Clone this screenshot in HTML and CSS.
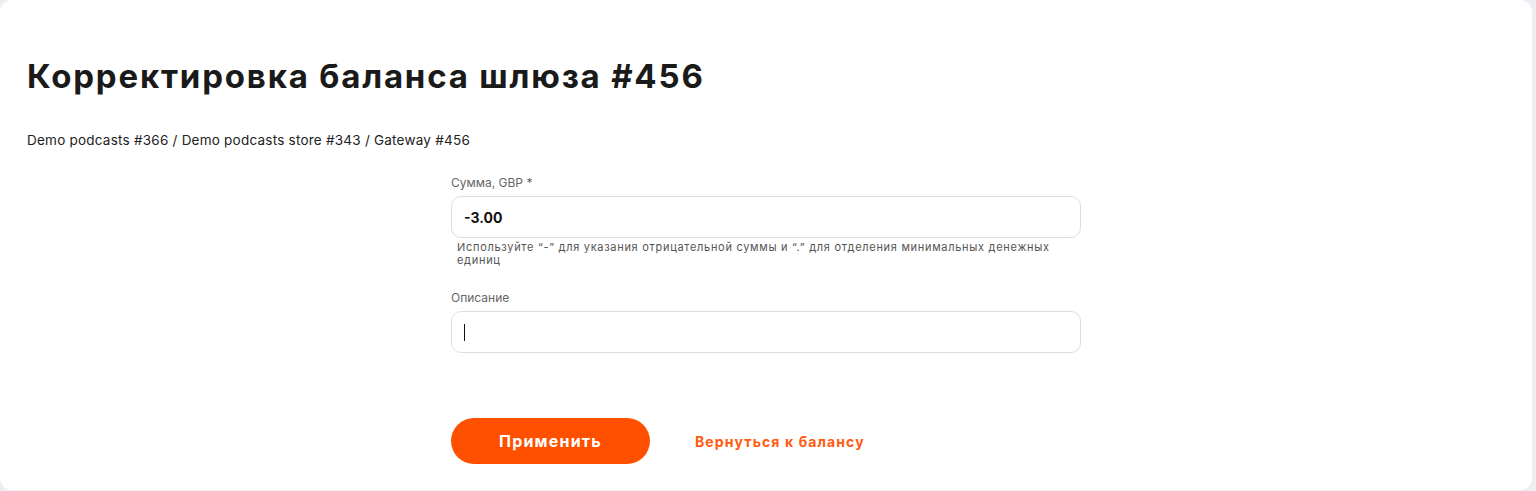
FILE: index.html
```html
<!DOCTYPE html>
<html lang="ru">
<head>
    <meta charset="UTF-8" />
    <meta name="viewport" content="width=device-width, initial-scale=1.0"/>
    <title>Корректировка баланса шлюза #456</title>
    <link rel="stylesheet" href="styles.css">
</head>
<body>
    <div class="card">
        <h1>Корректировка баланса шлюза #456</h1>
        <div class="breadcrumbs">Demo podcasts #366 / Demo podcasts store #343 / Gateway #456</div>

        <form class="balance-form">
            <div class="field">
                <label for="amount">Сумма, GBP *</label>
                <input type="text" id="amount" class="amount" value="-3.00" />
                <div class="hint">Используйте “-” для указания отрицательной суммы и “.” для отделения минимальных денежных единиц</div>
            </div>

            <div class="field">
                <label for="description">Описание</label>
                <div class="input-wrap">
                    <input type="text" id="description" />
                    <span class="caret"></span>
                </div>
            </div>

            <div class="actions">
                <button type="submit">Применить</button>
                <a href="#" class="back-link">Вернуться к балансу</a>
            </div>
        </form>
    </div>
</body>
</html>
```

FILE: styles.css
```css
* {
    box-sizing: border-box;
    margin: 0;
    padding: 0;
}

body {
    font-family: 'Inter', 'Noto Sans', sans-serif;
    background: #eceef1;
    color: #1c1c1c;
    width: 1536px;
    height: 491px;
    overflow: hidden;
}

.card {
    background: #ffffff;
    width: 1532px;
    height: 490px;
    border-radius: 12px;
    padding: 55px 27px 0;
}

h1 {
    font-size: 33px;
    font-weight: 700;
    line-height: 42px;
    letter-spacing: 1.8px;
    color: #1a1a1a;
}

.breadcrumbs {
    margin-top: 33px;
    font-size: 13.5px;
    line-height: 20px;
    letter-spacing: 0.23px;
    color: #222;
}

.balance-form {
    width: 630px;
    margin: 25px 0 0 424px;
}

.field {
    margin-bottom: 23px;
}

.field label {
    display: block;
    font-size: 12px;
    line-height: 16px;
    color: #666;
    margin-bottom: 5px;
}

.field input {
    width: 100%;
    height: 42px;
    border: 1px solid #dedede;
    border-radius: 10px;
    padding: 0 12px;
    font-family: inherit;
    font-size: 14px;
    color: #111;
    outline: none;
    background: #fff;
}

.field input.amount {
    font-weight: 700;
}

.input-wrap {
    position: relative;
}

.caret {
    position: absolute;
    left: 13px;
    top: 13px;
    width: 1px;
    height: 17px;
    background: #111;
}

.hint {
    margin-top: 3px;
    padding-left: 6px;
    font-size: 11px;
    line-height: 13px;
    letter-spacing: 0.7px;
    color: #555;
}

.actions {
    display: flex;
    align-items: center;
    gap: 45px;
    margin-top: 65px;
}

.actions button {
    width: 199px;
    height: 46px;
    border: none;
    border-radius: 23px;
    background: #ff5000;
    color: #fff;
    font-family: inherit;
    font-size: 16px;
    font-weight: 700;
    letter-spacing: 1.2px;
    cursor: pointer;
}

.back-link {
    color: #ff5a0f;
    font-size: 14px;
    font-weight: 700;
    letter-spacing: 1.1px;
    text-decoration: none;
}
```
